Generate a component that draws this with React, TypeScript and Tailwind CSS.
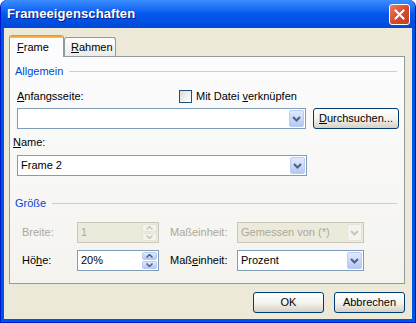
import React from "react";

const font = { fontFamily: '"Liberation Sans", Arial, sans-serif' };

function Chevron({ disabled = false }: { disabled?: boolean }) {
  return (
    <svg width="9" height="6" viewBox="0 0 9 6">
      <path d="M1 1 L4.5 4.5 L8 1" fill="none" stroke={disabled ? "#C9C7BA" : "#4D6185"} strokeWidth="2" />
    </svg>
  );
}

function Combo({ text, w, disabled = false }: { text: string; w: string; disabled?: boolean }) {
  return (
    <div
      className={`${w} h-[21px] flex items-center border ${disabled ? "border-[#C9C7BA] bg-[#EBEADB] text-[#ACA899]" : "border-[#7F9DB9] bg-white text-black"}`}
    >
      <div className="flex-1 pl-[3px] text-[11px] leading-none whitespace-nowrap">{text}</div>
      <div
        className={`w-[15px] h-[17px] mr-[1px] flex items-center justify-center rounded-[2px] ${disabled ? "bg-[#F4F3EE] border border-[#E6E4D8]" : "bg-gradient-to-b from-[#E1EAFE] to-[#B4C8F6] border border-[#B9CBF3]"}`}
      >
        <Chevron disabled={disabled} />
      </div>
    </div>
  );
}

function Spin({ text, disabled = false }: { text: string; disabled?: boolean }) {
  const arrow = disabled ? "#C9C7BA" : "#4D6185";
  return (
    <div
      className={`w-[82px] h-[21px] flex items-center border ${disabled ? "border-[#C9C7BA] bg-[#EBEADB] text-[#ACA899]" : "border-[#7F9DB9] bg-white text-black"}`}
    >
      <div className="flex-1 pl-[3px] text-[11px] leading-none">{text}</div>
      <div className="w-[15px] h-[17px] mr-[1px] flex flex-col gap-[1px]">
        <div className={`flex-1 flex items-center justify-center rounded-[2px] ${disabled ? "bg-[#F4F3EE] border border-[#E6E4D8]" : "bg-gradient-to-b from-[#E1EAFE] to-[#B4C8F6] border border-[#B9CBF3]"}`}>
          <svg width="7" height="4" viewBox="0 0 7 4"><path d="M0.5 3.5 L3.5 0.5 L6.5 3.5" fill="none" stroke={arrow} strokeWidth="1.5" /></svg>
        </div>
        <div className={`flex-1 flex items-center justify-center rounded-[2px] ${disabled ? "bg-[#F4F3EE] border border-[#E6E4D8]" : "bg-gradient-to-b from-[#E1EAFE] to-[#B4C8F6] border border-[#B9CBF3]"}`}>
          <svg width="7" height="4" viewBox="0 0 7 4"><path d="M0.5 0.5 L3.5 3.5 L6.5 0.5" fill="none" stroke={arrow} strokeWidth="1.5" /></svg>
        </div>
      </div>
    </div>
  );
}

function XpButton({ children, w }: { children: React.ReactNode; w: string }) {
  return (
    <div
      className={`${w} h-[21px] flex items-center justify-center rounded-[3px] border border-[#003C74] bg-gradient-to-b from-[#FFFFFF] via-[#F4F4F0] to-[#D6D0C5] text-[11px] text-black leading-none`}
    >
      {children}
    </div>
  );
}

function GroupHeader({ label, ml }: { label: string; ml: string }) {
  return (
    <div className="h-[14px] flex items-center pl-[5px] pr-[7px]">
      <span className="text-[11px] text-[#0046D5] leading-none whitespace-nowrap">{label}</span>
      <div className={`flex-1 ${ml} h-[1px] bg-[#D0D0BF]`} />
    </div>
  );
}

export default function App() {
  return (
    <div className="w-[416px] h-[323px] flex flex-col bg-[#0054E3] rounded-t-[7px] overflow-hidden border-x border-b border-[#0019CF]" style={font}>
      {/* Title bar */}
      <div className="h-[28px] flex items-center pl-[6px] pr-[5px] bg-gradient-to-b from-[#3C8DFF] via-[#0058EE] to-[#0048D8]">
        <span className="flex-1 text-white font-bold text-[13px] tracking-[0.1px]" style={{ textShadow: "1px 1px 0 #0A1883" }}>
          Frameeigenschaften
        </span>
        <div className="w-[21px] h-[21px] rounded-[3px] border border-white bg-gradient-to-br from-[#E87E64] via-[#D94A2B] to-[#C1401E] flex items-center justify-center">
          <svg width="11" height="11" viewBox="0 0 11 11">
            <path d="M1.5 1.5 L9.5 9.5 M9.5 1.5 L1.5 9.5" stroke="white" strokeWidth="2" strokeLinecap="square" />
          </svg>
        </div>
      </div>

      {/* Body */}
      <div className="flex-1 mx-[3px] mb-[3px] bg-[#ECE9D8] flex flex-col pl-[5px] pr-[7px] pt-[7px] pb-[5px]">
        {/* Tabs */}
        <div className="h-[21px] flex items-end relative z-10">
          <div className="w-[55px] h-[22px] -mb-[1px] flex flex-col rounded-t-[3px] overflow-hidden border-x border-[#919B9C] bg-[#FCFCFE]">
            <div className="h-[3px] bg-gradient-to-b from-[#E68B2C] to-[#FFC73C]" />
            <div className="flex-1 flex items-center pl-[7px] text-[11px] text-black leading-none">
              <span><u>F</u>rame</span>
            </div>
          </div>
          <div className="w-[52px] h-[19px] flex items-center pl-[6px] rounded-t-[3px] border border-b-0 border-[#919B9C] bg-gradient-to-b from-[#FFFFFF] to-[#ECEBE6] text-[11px] text-black leading-none">
            <span><u>R</u>ahmen</span>
          </div>
        </div>

        {/* Panel */}
        <div className="h-[228px] border border-[#919B9C] bg-gradient-to-b from-[#FCFCFE] to-[#F4F3EE] flex flex-col pt-[7px]">
          <GroupHeader label="Allgemein" ml="ml-[6px]" />

          <div className="mt-[11px] h-[14px] flex items-center pl-[7px]">
            <span className="w-[162px] text-[11px] text-black leading-none"><u>A</u>nfangsseite:</span>
            <div className="w-[13px] h-[13px] border border-[#1C5180] bg-gradient-to-br from-[#DCDCD7] to-[#FFFFFF]" />
            <span className="ml-[4px] text-[11px] text-black leading-none">Mit Datei <u>v</u>erknüpfen</span>
          </div>

          <div className="mt-[5px] flex items-start pl-[7px]">
            <Combo text="" w="w-[289px]" />
            <div className="ml-[7px]">
              <XpButton w="w-[86px]"><span><u>D</u>urchsuchen...</span></XpButton>
            </div>
          </div>

          <div className="mt-[6px] h-[14px] flex items-center pl-[3px]">
            <span className="text-[11px] text-black leading-none"><u>N</u>ame:</span>
          </div>

          <div className="mt-[6px] pl-[7px]">
            <Combo text="Frame 2" w="w-[290px]" />
          </div>

          <div className="mt-[20px]">
            <GroupHeader label="Größe" ml="ml-[6px]" />
          </div>

          <div className="mt-[12px] flex items-center pl-[12px]">
            <span className="w-[55px] text-[11px] text-[#ACA899] leading-none">Breite:</span>
            <Spin text="1" disabled />
            <span className="ml-[11px] w-[67px] text-[11px] text-[#ACA899] leading-none">Maßeinheit:</span>
            <Combo text="Gemessen von (*)" w="w-[127px]" disabled />
          </div>

          <div className="mt-[7px] flex items-center pl-[12px]">
            <span className="w-[55px] text-[11px] text-black leading-none">Hö<u>h</u>e:</span>
            <Spin text="20%" />
            <span className="ml-[11px] w-[67px] text-[11px] text-black leading-none">Maß<u>e</u>inheit:</span>
            <Combo text="Prozent" w="w-[127px]" />
          </div>
        </div>

        {/* Buttons */}
        <div className="mt-[8px] flex justify-end gap-[10px]">
          <XpButton w="w-[71px]">OK</XpButton>
          <XpButton w="w-[71px]">Abbrechen</XpButton>
        </div>
      </div>
    </div>
  );
}
